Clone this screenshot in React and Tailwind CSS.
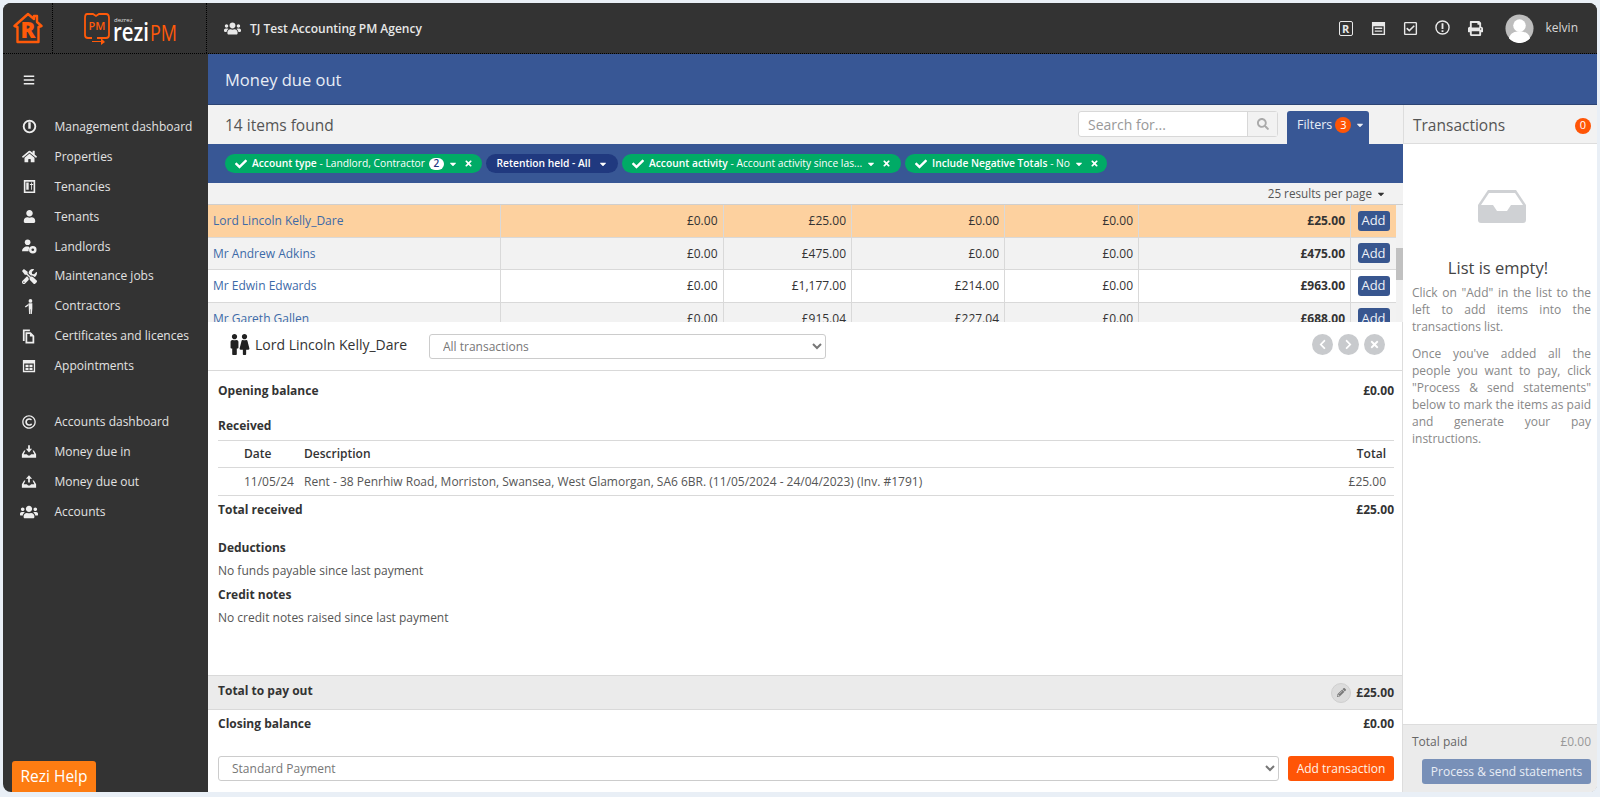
import React from "react";
import {
  FaHome,
  FaUser,
  FaTools,
  FaUsers,
  FaRegCopyright,
  FaPrint,
  FaRegCheckSquare,
  FaCheck,
  FaTimes,
  FaChevronLeft,
  FaChevronRight,
  FaPencilAlt,
  FaSearch,
  FaMale,
  FaFemale,
  FaCaretDown,
  FaBars,
} from "react-icons/fa";

const font = { fontFamily: '"Open Sans", sans-serif' };

const DashIcon = () => (
  <svg viewBox="0 0 16 16" className="w-[15px] h-[15px]" fill="none" stroke="currentColor">
    <circle cx="8" cy="8" r="6.2" strokeWidth="2" />
    <path d="M8 3.500v7" strokeWidth="2.6" />
  </svg>
);

const BookIcon = () => (
  <svg viewBox="0 0 16 16" className="w-[13px] h-[15px]" fill="currentColor">
    <path d="M1 0h14v16H1zM3 2v12h10V2z" fillRule="evenodd" />
    <path d="M4 3h3v9H4zM8.500 5h1.500V3h1v2h1.500v1H11v6H10V6H8.500z" />
  </svg>
);

const LandlordIcon = () => (
  <svg viewBox="0 0 16 16" className="w-[15px] h-[15px]" fill="currentColor">
    <circle cx="6" cy="3.500" r="3" />
    <path d="M0 13c0-3 2-4 4-5h3l1 1.500A5 5 0 0 0 7 13z" />
    <circle cx="11.500" cy="11.500" r="4" />
    <circle cx="11.500" cy="11.500" r="1.400" fill="#333333" />
  </svg>
);

const ContractorIcon = () => (
  <svg viewBox="0 0 16 16" className="w-[15px] h-[15px]" fill="currentColor">
    <circle cx="9" cy="2" r="2" />
    <path d="M7 4.500h4v6l-.5 5.500H9V11H8.500v5H7.500z" />
    <path d="M7 5 3 8l1 1 3-2z" />
  </svg>
);

const DocIcon = () => (
  <svg viewBox="0 0 16 16" className="w-[14px] h-[15px]" fill="currentColor">
    <path d="M1 0h8v2H3v11H1z" />
    <path d="M4 3h6l4 4v9H4zm2 2v9h6V8H9V5z" fillRule="evenodd" />
  </svg>
);

const CalendarIcon = () => (
  <svg viewBox="0 0 16 16" className="w-[14px] h-[14px]" fill="currentColor">
    <path d="M1 1h14v14H1zM2.500 5v8.500h11V5z" fillRule="evenodd" />
    <path d="M4 6.500h3.500V9H4zM8.500 6.500H12V9H8.500zM4 10h3.500v2.500H4zM8.500 10H12v2.500H8.500z" />
  </svg>
);

const TrayIcon = ({ up }) => (
  <svg viewBox="0 0 18 16" className="w-[16px] h-[15px]" fill="currentColor">
    <path d="M3.500 7 1 11v4h16v-4l-2.500-4H13l2 4h-3.500L10 12.500H8L6.500 11H3l2-4z" />
    <path d={up ? "M9 1 5.500 5H8v4h2V5h2.500z" : "M8 1h2v4h2.500L9 9 5.500 5H8z"} />
  </svg>
);

const menuTop = [
  ["Management dashboard", <DashIcon />],
  ["Properties", <FaHome className="text-[15px]" />],
  ["Tenancies", <BookIcon />],
  ["Tenants", <FaUser className="text-[13px]" />],
  ["Landlords", <LandlordIcon />],
  ["Maintenance jobs", <FaTools className="text-[15px]" />],
  ["Contractors", <ContractorIcon />],
  ["Certificates and licences", <DocIcon />],
  ["Appointments", <CalendarIcon />],
];

const menuBottom = [
  ["Accounts dashboard", <FaRegCopyright className="text-[14px]" />],
  ["Money due in", <TrayIcon />],
  ["Money due out", <TrayIcon up />],
  ["Accounts", <FaUsers className="text-[18px]" />],
];

const rows = [
  ["Lord Lincoln Kelly_Dare", "£0.00", "£25.00", "£0.00", "£0.00", "£25.00", "bg-[#fdd19f]"],
  ["Mr Andrew Adkins", "£0.00", "£475.00", "£0.00", "£0.00", "£475.00", "bg-[#f2f2f2]"],
  ["Mr Edwin Edwards", "£0.00", "£1,177.00", "£214.00", "£0.00", "£963.00", "bg-white"],
  ["Mr Gareth Gallen", "£0.00", "£915.04", "£227.04", "£0.00", "£688.00", "bg-[#f2f2f2]"],
];

const MenuItem = ({ label, icon }) => (
  <div className="flex items-center h-[29.9px] text-[12px] text-[#e2e2e2]">
    <span className="w-[51.500px] pl-[13px] pr-[12px] flex justify-center shrink-0 text-[#eeeeee]">{icon}</span>
    <span className="whitespace-nowrap">{label}</span>
  </div>
);

const Pill = ({ title, value, count, navy, tick = true, width }) => (
  <div
    className={`flex items-center h-[19px] rounded-full text-white text-[10.250px] whitespace-nowrap ${width} ${
      navy ? "bg-[#20397f] justify-center" : "bg-[#00ab66] pl-[10px]"
    }`}
  >
    {tick && <FaCheck className="text-[12px] mr-[5px] shrink-0" />}
    <span className="font-semibold">{title}</span>
    {value && <span>&nbsp;- {value}</span>}
    {count && (
      <span className="ml-[4px] w-[15px] h-[12px] rounded-full bg-white text-[#20397f] text-[10px] font-semibold flex items-center justify-center">
        {count}
      </span>
    )}
    <FaCaretDown className={`text-[10px] shrink-0 ${navy ? "ml-[7px]" : "ml-[4px]"}`} />
    {!navy && <FaTimes className="text-[9px] ml-[6px] shrink-0" />}
  </div>
);

const CircleBtn = ({ children }) => (
  <span className="w-[21px] h-[21px] rounded-full bg-[#c8cacd] text-white text-[11px] flex items-center justify-center">
    {children}
  </span>
);

const TopIcons = () => (
  <div className="ml-auto flex items-center text-[#e8e8e8]">
    <span className="w-[14px] h-[15px] border-[1.5px] border-[#e8e8e8] rounded-[2px] text-[11px] leading-none font-bold flex items-center justify-center">
      R
    </span>
    <svg viewBox="0 0 16 16" className="w-[15px] h-[15px] ml-[18px]" fill="currentColor">
      <path d="M1 1h14v14H1zM2.500 5.500v8h11v-8z" fillRule="evenodd" />
      <path d="M4 7h8v1.500H4zM4 10h8v1.500H4z" />
    </svg>
    <FaRegCheckSquare className="text-[15px] ml-[17px]" />
    <svg viewBox="0 0 16 16" className="w-[15px] h-[15px] ml-[17px] -mt-[2px]" fill="none" stroke="currentColor">
      <circle cx="8" cy="8" r="7" strokeWidth="1.500" />
      <path d="M8 3.500v6M8 10.800v2" strokeWidth="2" />
    </svg>
    <FaPrint className="text-[15px] ml-[18px] mr-[22px]" />
    <svg viewBox="0 0 30 30" className="w-[29px] h-[29px]">
      <circle cx="15" cy="15" r="14.500" fill="#bdbdbd" />
      <circle cx="15" cy="12" r="6.500" fill="#ffffff" />
      <path d="M4 25c2-6 6-7 11-7s9 1 11 7a14.500 14.500 0 0 1-22 0z" fill="#ffffff" />
    </svg>
    <span className="ml-[12px] mr-[19px] text-[12px] text-[#d8d8d8]">kelvin</span>
  </div>
);

const Logos = () => (
  <>
    <div className="w-[50px] h-full border-r border-dotted border-black flex items-center justify-center shrink-0">
      <svg viewBox="0 0 30 32" className="w-[30px] h-[32px]">
        <path
          d="M15 2 1.500 14l3 1v15h21V15l3-1-4.500-4V4h-3v3z"
          fill="none"
          stroke="#ff5a0a"
          strokeWidth="2.400"
          strokeLinejoin="round"
        />
        <text x="7.500" y="26" fontSize="22" fontWeight="800" fill="#ff5a0a" fontFamily="Open Sans">
          R
        </text>
      </svg>
    </div>
    <div className="w-[154px] h-full border-r border-dotted border-black shrink-0 flex items-center justify-center">
      <svg viewBox="0 0 100 34" className="w-[100px] h-[34px] overflow-visible">
        <path
          d="M7 3h6l3 2 3-2h7q3 0 3 4v17q0 3-3 3h-9M12 27H8q-3 0-3-3V7q0-4 2-4"
          fill="none"
          stroke="#ff5a0a"
          strokeWidth="1.800"
        />
        <path d="M12 30h9v-3l4 4-4 3v-3h-9z" fill="#ff5a0a" />
        <text x="8.500" y="19" fontSize="11" fontWeight="600" fill="#ff5a0a" fontFamily="Open Sans">
          PM
        </text>
        <text x="34" y="11" fontSize="6" fill="#e0e0e0" fontFamily="Open Sans">
          dezrez
        </text>
        <text
          x="33"
          y="30"
          fontSize="25"
          fontWeight="600"
          fill="#ffffff"
          fontFamily="Open Sans"
          textLength="36"
          lengthAdjust="spacingAndGlyphs"
        >
          rezi
        </text>
        <text
          x="70"
          y="30"
          fontSize="22"
          fill="#ff5a0a"
          fontFamily="Open Sans"
          textLength="27"
          lengthAdjust="spacingAndGlyphs"
        >
          PM
        </text>
      </svg>
    </div>
  </>
);

const App = () => {
  return (
    <div
      className="h-[797px] w-[1600px] overflow-hidden bg-[#e9eff6] pt-[3px] pl-[3px] pr-[3px] pb-[5px] text-[#333]"
      style={font}
    >
      <div className="h-full flex flex-col rounded-[8px] overflow-hidden bg-[#333]">
        {/* top bar */}
        <header className="h-[51px] shrink-0 flex items-center bg-[#333] border-b border-dotted border-black">
          <Logos />
          <div className="flex items-center ml-[17px] text-[#e8e8e8]">
            <FaUsers className="text-[17px]" />
            <span className="ml-[9px] mt-[2px] text-[12px] font-semibold">TJ Test Accounting PM Agency</span>
          </div>
          <TopIcons />
        </header>

        <div className="flex-1 flex min-h-0">
          {/* sidebar */}
          <aside className="w-[205px] shrink-0 flex flex-col">
            <div className="pl-[20px] pt-[20px] h-[58px] text-[#eeeeee]">
              <FaBars className="text-[12px]" />
            </div>
            {menuTop.map(([label, icon]) => (
              <MenuItem key={label} label={label} icon={icon} />
            ))}
            <div className="h-[26px] shrink-0"></div>
            {menuBottom.map(([label, icon]) => (
              <MenuItem key={label} label={label} icon={icon} />
            ))}
            <div className="mt-auto ml-[9px] w-[84px] h-[31px] bg-[#fd7c12] rounded-t-[3px] text-white text-[15.5px] flex items-center justify-center">
              Rezi Help
            </div>
          </aside>

          <main className="flex-1 min-w-0 flex flex-col bg-white">
            <div className="h-[51px] shrink-0 pt-[2px] bg-[#385795] border-b border-[#2c4474] flex items-center pl-[17px] text-[16.500px] text-[#e8edf5]">
              Money due out
            </div>

            <div className="flex-1 min-h-0 flex">
              {/* centre column */}
              <div className="w-[1195px] shrink-0 flex flex-col">
                <div className="h-[39px] shrink-0 bg-[#f2f2f2] flex items-center pl-[17px] text-[15.500px] text-[#555]">
                  <span className="mt-[2px]">14 items found</span>
                  <div className="ml-auto flex items-start self-start mt-[6px]">
                    <div className="w-[200px] h-[26px] bg-white border border-[#d8d8d8] rounded-[3px] flex items-center text-[14px] text-[#999]">
                      <span className="flex-1 pl-[9px]">Search for...</span>
                      <span className="w-[30px] h-full bg-[#f2f2f2] border-l border-[#d8d8d8] flex items-center justify-center text-[#aaa]">
                        <FaSearch className="text-[12px]" />
                      </span>
                    </div>
                    <div className="ml-[9px] mr-[34px] w-[82px] h-[33px] bg-[#385795] rounded-t-[3px] flex items-center pl-[10px] pb-[5px] text-[12.5px] text-[#e8edf5]">
                      Filters
                      <span className="ml-[3px] w-[16px] h-[16px] rounded-full bg-[#ff5506] text-white text-[11px] flex items-center justify-center">
                        3
                      </span>
                      <FaCaretDown className="text-[10px] ml-[4px]" />
                    </div>
                  </div>
                </div>

                <div className="h-[39px] shrink-0 bg-[#385795] flex items-center pl-[17px] gap-[4px]">
                  <Pill title="Account type" value="Landlord, Contractor" count="2" width="w-[257px]" />
                  <Pill title="Retention held - All" navy tick={false} width="w-[132px]" />
                  <Pill title="Account activity" value="Account activity since las..." width="w-[279px]" />
                  <Pill title="Include Negative Totals" value="No" width="w-[202px]" />
                </div>

                <div className="h-[22px] shrink-0 bg-[#f2f2f2] border-b border-[#cfcfcf] flex items-center justify-end pr-[17px] text-[11.700px] text-[#555]">
                  25 results per page
                  <FaCaretDown className="text-[10px] ml-[4px] text-[#333]" />
                </div>

                {/* results table, cut off by the details panel */}
                <div className="h-[117px] shrink-0 overflow-hidden flex">
                  <div className="w-[1188px] shrink-0">
                    {rows.map((r) => (
                      <div
                        key={r[0]}
                        className={`grid grid-cols-[292px_222.500px_128.500px_153px_134px_212px_46px] h-[32.500px] border-b border-[#d9d9d9] text-[12px] items-center ${r[6]}`}
                      >
                        <span className="pl-[5px] pt-[1px] text-[#3c6aa8] h-full flex items-center">{r[0]}</span>
                        {r.slice(1, 5).map((v, i) => (
                          <span
                            key={i}
                            className="border-l border-[#d9d9d9] h-full pt-[1px] pr-[5px] flex items-center justify-end"
                          >
                            {v}
                          </span>
                        ))}
                        <span className="border-l border-[#d9d9d9] h-full pt-[1px] pr-[5px] flex items-center justify-end font-bold">
                          {r[5]}
                        </span>
                        <span className="border-l border-[#d9d9d9] h-full flex items-center justify-center">
                          <span className="w-[32px] h-[20px] rounded-[3px] bg-[#38568f] text-[#eef2f8] text-[13px] flex items-center justify-center">
                            Add
                          </span>
                        </span>
                      </div>
                    ))}
                  </div>
                  <div className="flex-1 bg-[#f1f1f1]">
                    <div className="mt-[43px] h-[32px] bg-[#c1c1c1]"></div>
                  </div>
                </div>

                {/* details panel */}
                <div className="flex-1 min-h-0 flex flex-col bg-white text-[12px] border-r border-[#dddddd]">
                  <div className="h-[49px] shrink-0 border-b border-[#d9d9d9] flex items-center pl-[16px] pr-[17px]">
                    <div className="w-[23px] flex text-[#222] text-[21px] -mt-[4px]">
                      <FaMale className="-mr-[11px] shrink-0" />
                      <FaFemale className="shrink-0" />
                    </div>
                    <span className="ml-[8px] -mt-[3px] text-[14px] w-[174px] whitespace-nowrap">Lord Lincoln Kelly_Dare</span>
                    <select
                      className="w-[397px] h-[25px] border border-[#cccccc] rounded-[3px] bg-white text-[12px] text-[#777] pl-[9px]"
                      defaultValue="All transactions"
                    >
                      <option>All transactions</option>
                    </select>
                    <div className="ml-auto flex gap-[5px] -mt-[4px]">
                      <CircleBtn><FaChevronLeft /></CircleBtn>
                      <CircleBtn><FaChevronRight /></CircleBtn>
                      <CircleBtn><FaTimes /></CircleBtn>
                    </div>
                  </div>

                  <div className="pl-[10px] pr-[8px]">
                    <div className="h-[38px] pt-[1px] flex items-center justify-between font-bold">
                      <span>Opening balance</span>
                      <span>£0.00</span>
                    </div>
                    <div className="h-[31px] pt-[2px] flex items-center font-bold">Received</div>
                    <div className="h-[28px] border-y border-[#d9d9d9] flex items-center pl-[26px] pr-[8px] font-semibold">
                      <span className="w-[60px]">Date</span>
                      <span>Description</span>
                      <span className="ml-auto">Total</span>
                    </div>
                    <div className="h-[28px] pt-[1px] border-b border-[#d9d9d9] flex items-center pl-[26px] pr-[8px] text-[#555]">
                      <span className="w-[60px]">11/05/24</span>
                      <span>Rent - 38 Penrhiw Road, Morriston, Swansea, West Glamorgan, SA6 6BR. (11/05/2024 - 24/04/2023) (Inv. #1791)</span>
                      <span className="ml-auto">£25.00</span>
                    </div>
                    <div className="h-[26px] pt-[1px] flex items-center justify-between font-bold">
                      <span>Total received</span>
                      <span>£25.00</span>
                    </div>
                    <div className="h-[14px]"></div>
                    <div className="h-[23px] flex items-center font-bold">Deductions</div>
                    <div className="h-[23px] flex items-center text-[#555]">No funds payable since last payment</div>
                    <div className="h-[24px] pt-[1px] flex items-center font-bold">Credit notes</div>
                    <div className="h-[23px] pt-[1px] flex items-center text-[#555]">No credit notes raised since last payment</div>
                  </div>

                  <div className="mt-auto h-[35px] shrink-0 bg-[#ebebeb] border-y border-[#d9d9d9] flex items-center pl-[10px] pr-[8px] font-bold">
                    <span className="pb-[4px]">Total to pay out</span>
                    <span className="ml-auto w-[20px] h-[20px] rounded-full bg-[#dcdcdc] border border-[#cfcfcf] flex items-center justify-center text-[#777] text-[9px]">
                      <FaPencilAlt />
                    </span>
                    <span className="ml-[5px]">£25.00</span>
                  </div>
                  <div className="h-[28px] shrink-0 flex items-center justify-between pl-[10px] pr-[8px] font-bold">
                    <span>Closing balance</span>
                    <span>£0.00</span>
                  </div>
                  <div className="h-[54px] shrink-0 flex pt-[18px] pl-[10px] pr-[8px]">
                    <select
                      className="flex-1 h-[25px] border border-[#cccccc] rounded-[3px] bg-white text-[12px] text-[#777] pl-[9px]"
                      defaultValue="Standard Payment"
                    >
                      <option>Standard Payment</option>
                    </select>
                    <span className="ml-[9px] w-[106px] h-[25px] rounded-[3px] bg-[#ff5506] text-[#fff3e8] text-[12px] flex items-center justify-center">
                      Add transaction
                    </span>
                  </div>
                </div>
              </div>

              {/* transactions */}
              <div className="flex-1 min-w-0 flex flex-col bg-white">
                <div className="h-[39px] shrink-0 pt-[3px] bg-[#f2f2f2] border-b border-l border-[#dddddd] flex items-center pl-[9px] pr-[6px] text-[15.500px] text-[#555]">
                  Transactions
                  <span className="ml-auto w-[16px] h-[16px] rounded-full bg-[#ff5506] text-white text-[11px] flex items-center justify-center">
                    0
                  </span>
                </div>
                <div className="flex-1 px-[9px] pr-[6px] pt-[44px]">
                  <svg viewBox="0 0 52 36" className="w-[52px] h-[36px] mx-auto">
                    <path d="M12 2h28l10 15v15q0 3-3 3H5q-3 0-3-3V17z" fill="#cfd1d4" />
                    <path d="M13 5h26l8 12H35l-4 6H21l-4-6H5z" fill="#ffffff" />
                  </svg>
                  <div className="mt-[32px] pr-[7px] text-center text-[16.500px] text-[#444]">List is empty!</div>
                  <p className="mt-[3px] text-[12px] leading-[17px] text-[#888] text-justify">
                    Click on "Add" in the list to the left to add items into the transactions list.
                  </p>
                  <p className="mt-[10px] text-[12px] leading-[17px] text-[#888] text-justify">
                    Once you've added all the people you want to pay, click "Process &amp; send statements" below to mark the items as paid and generate your pay instructions.
                  </p>
                </div>
                <div className="h-[68px] shrink-0 bg-[#ebebeb] border-t border-[#dddddd] pl-[9px] pr-[6px] pt-[8px]">
                  <div className="flex justify-between text-[12px] text-[#666]">
                    <span>Total paid</span>
                    <span className="text-[#999]">£0.00</span>
                  </div>
                  <div className="mt-[8px] ml-[10px] h-[25px] rounded-[3px] bg-[#7890b8] text-[#e8edf5] text-[12px] flex items-center justify-center">
                    Process &amp; send statements
                  </div>
                </div>
              </div>
            </div>
          </main>
        </div>
      </div>
    </div>
  );
};

export default App;
